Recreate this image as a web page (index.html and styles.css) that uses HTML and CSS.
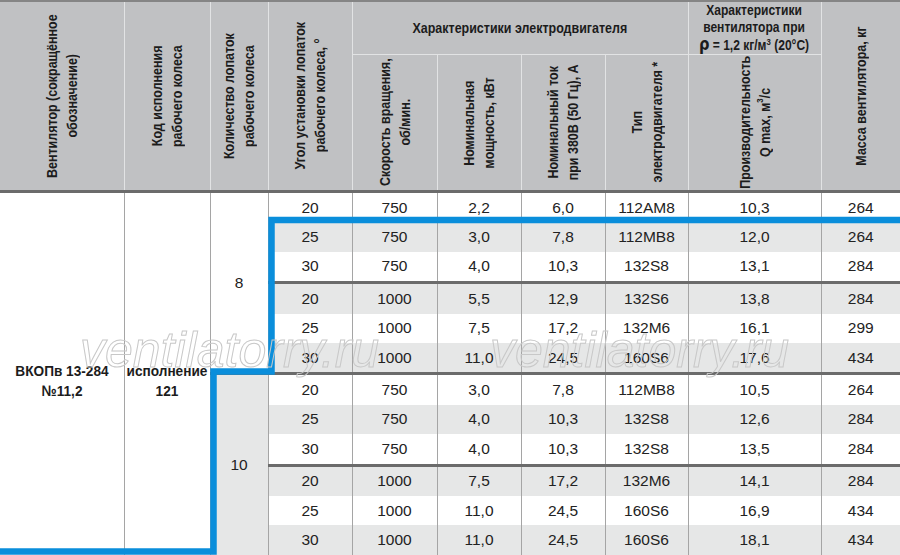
FILE: index.html
```html
<!DOCTYPE html>
<html lang="ru">
<head>
<meta charset="utf-8">
<title>ВКОПв 13-284</title>
<link rel="stylesheet" href="styles.css">
</head>
<body>
<div class="sheet">
  <table class="spec">
    <colgroup>
      <col class="c1"><col class="c2"><col class="c3"><col class="c4"><col class="c5">
      <col class="c6"><col class="c7"><col class="c8"><col class="c9"><col class="c10">
    </colgroup>
    <thead>
      <tr class="h1">
        <th rowspan="2"><div class="vbox tall"><span class="vt">Вентилятор (сокращённое<br>обозначение)</span></div></th>
        <th rowspan="2"><div class="vbox tall"><span class="vt">Код исполнения<br>рабочего колеса</span></div></th>
        <th rowspan="2"><div class="vbox tall"><span class="vt">Количество лопаток<br>рабочего колеса</span></div></th>
        <th rowspan="2"><div class="vbox tall"><span class="vt">Угол установки лопаток<br>рабочего колеса, °</span></div></th>
        <th colspan="4"><div class="fit"><span class="hz">Характеристики электродвигателя</span></div></th>
        <th><div class="fit"><span class="hz grp3">Характеристики<br>вентилятора при<br><span class="rho">ρ</span> = 1,2 кг/м<sup>3</sup> (20°С)</span></div></th>
        <th rowspan="2"><div class="vbox tall"><span class="vt">Масса вентилятора, кг</span></div></th>
      </tr>
      <tr class="h2">
        <th><div class="vbox"><span class="vt">Скорость вращения,<br>об/мин.</span></div></th>
        <th><div class="vbox"><span class="vt">Номинальная<br>мощность, кВт</span></div></th>
        <th><div class="vbox"><span class="vt">Номинальный ток<br>при 380В (50 Гц), А</span></div></th>
        <th><div class="vbox"><span class="vt">Тип<br>электродвигателя *</span></div></th>
        <th><div class="vbox"><span class="vt">Производительность<br>Q max, м<sup>3</sup>/с</span></div></th>
      </tr>
    </thead>
    <tbody>
      <tr>
        <td rowspan="12" class="name"><div class="fit"><span class="nm">ВКОПв 13-284<br>№11,2</span></div></td>
        <td rowspan="12" class="name"><div class="fit"><span class="nm">исполнение<br>121</span></div></td>
        <td rowspan="6">8</td>
        <td>20</td><td>750</td><td>2,2</td><td>6,0</td><td>112AM8</td><td>10,3</td><td>264</td>
      </tr>
      <tr><td>25</td><td>750</td><td>3,0</td><td>7,8</td><td>112MB8</td><td>12,0</td><td>264</td></tr>
      <tr><td>30</td><td>750</td><td>4,0</td><td>10,3</td><td>132S8</td><td>13,1</td><td>284</td></tr>
      <tr class="sep"><td>20</td><td>1000</td><td>5,5</td><td>12,9</td><td>132S6</td><td>13,8</td><td>284</td></tr>
      <tr><td>25</td><td>1000</td><td>7,5</td><td>17,2</td><td>132M6</td><td>16,1</td><td>299</td></tr>
      <tr><td>30</td><td>1000</td><td>11,0</td><td>24,5</td><td>160S6</td><td>17,6</td><td>434</td></tr>
      <tr class="sep">
        <td rowspan="6" class="shade">10</td>
        <td>20</td><td>750</td><td>3,0</td><td>7,8</td><td>112MB8</td><td>10,5</td><td>264</td>
      </tr>
      <tr><td>25</td><td>750</td><td>4,0</td><td>10,3</td><td>132S8</td><td>12,6</td><td>284</td></tr>
      <tr><td>30</td><td>750</td><td>4,0</td><td>10,3</td><td>132S8</td><td>13,5</td><td>284</td></tr>
      <tr class="sep"><td>20</td><td>1000</td><td>7,5</td><td>17,2</td><td>132M6</td><td>14,1</td><td>284</td></tr>
      <tr><td>25</td><td>1000</td><td>11,0</td><td>24,5</td><td>160S6</td><td>16,9</td><td>434</td></tr>
      <tr><td>30</td><td>1000</td><td>11,0</td><td>24,5</td><td>160S6</td><td>18,1</td><td>434</td></tr>
    </tbody>
  </table>
  <svg class="hl" width="900" height="555" viewBox="0 0 900 555" aria-hidden="true">
    <polyline points="900,220 271.5,220 271.5,371.5 213.5,371.5 213.5,551.5 0,551.5" fill="none" stroke="#0a8edb" stroke-width="6.5" stroke-linejoin="miter"/>
  </svg>
  <span class="wm wm1">ventilatorry.ru</span>
  <span class="wm wm2">ventilatorry.ru</span>
</div>
</body>
</html>
```

FILE: styles.css
```css
html, body {
  margin: 0;
  padding: 0;
  background: #ffffff;
}

.sheet {
  position: relative;
  width: 900px;
  height: 555px;
  overflow: hidden;
  font-family: "Liberation Sans", Arial, sans-serif;
  color: #222222;
}

.spec {
  width: 900px;
  table-layout: fixed;
  border-collapse: collapse;
  border-spacing: 0;
}

.c1 { width: 124px; }
.c2 { width: 86px; }
.c3 { width: 58px; }
.c4 { width: 84px; }
.c5 { width: 85px; }
.c6 { width: 84px; }
.c7 { width: 84px; }
.c8 { width: 83px; }
.c9 { width: 133px; }
.c10 { width: 79px; }

/* header */
.spec th {
  background: #c0c1c3;
  color: #1c1c1c;
  font-family: "Liberation Sans", Arial, sans-serif;
  font-weight: bold;
  font-size: 14px;
  padding: 0;
  border: 1px solid #e2e3e4;
  border-top: 2px solid #858585;
  text-align: center;
  vertical-align: middle;
}

.spec .h2 th {
  border-top: 1px solid #e2e3e4;
}

.spec .h1 { height: 53px; }
.spec .h2 { height: 137px; }

.spec th:first-child { border-left: none; }
.spec th:last-child { border-right: none; }

.fit {
  display: flex;
  justify-content: center;
  align-items: center;
}

.hz {
  display: block;
  white-space: nowrap;
  transform: scaleX(0.86);
  font-size: 14.5px;
  line-height: 17px;
}

.hz.grp3 {
  font-size: 14px;
  line-height: 17px;
  transform: scaleX(0.86);
}

.rho {
  font-family: "DejaVu Sans", sans-serif;
  font-size: 17px;
}

.spec sup {
  font-size: 9px;
  line-height: 0;
  vertical-align: 5px;
}

.vbox {
  display: flex;
  justify-content: center;
  align-items: center;
  height: 130px;
}

.vbox.tall {
  height: 170px;
}

.vt {
  display: block;
  writing-mode: vertical-rl;
  white-space: nowrap;
  text-align: center;
  line-height: 20px;
  font-size: 14.5px;
  transform: rotate(180deg) scaleY(0.86);
}

/* body */
.spec td {
  height: 29.4px;
  padding: 0;
  font-size: 15.5px;
  text-align: center;
  vertical-align: middle;
  border-left: 1px solid #a5a5a5;
  border-right: 1px solid #a5a5a5;
  border-top: none;
  border-bottom: none;
  background: #ffffff;
}

.spec tbody tr:nth-child(even) td {
  background: #e6e7e7;
}

.spec tbody tr:first-child td {
  border-top: 3px solid #6b6b6b;
}

.spec tbody tr.sep td {
  border-top: 3px solid #6b6b6b;
}

.spec tbody tr:last-child td {
  border-bottom: 1px solid #a5a5a5;
}

.spec td:first-child { border-left: none; }
.spec tr td:last-child { border-right: none; }

.spec td.shade {
  background: #e6e7e7;
}

.spec td.name {
  padding-top: 13px;
}

.nm {
  display: block;
  white-space: nowrap;
  font-weight: bold;
  font-size: 15.5px;
  line-height: 20px;
  transform: scaleX(0.88);
  color: #1c1c1c;
}

/* overlays */
.hl {
  position: absolute;
  left: 0;
  top: 0;
  pointer-events: none;
}

.wm {
  position: absolute;
  top: 325px;
  font-family: "Liberation Sans", Arial, sans-serif;
  font-style: italic;
  font-size: 50px;
  line-height: 50px;
  color: transparent;
  -webkit-text-stroke: 1px #c8c8c8;
  white-space: nowrap;
  pointer-events: none;
}

.wm1 { left: 80px; }
.wm2 { left: 490px; }
```
